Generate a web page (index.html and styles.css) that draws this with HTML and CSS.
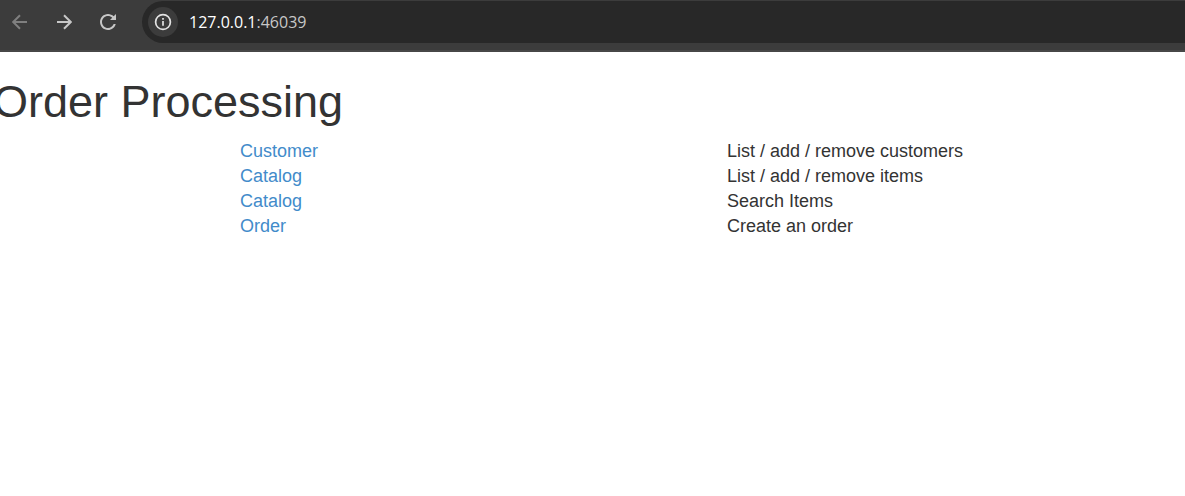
FILE: index.html
```html
<!DOCTYPE html>
<html lang="en">
<head>
<meta charset="utf-8">
<title>Order Processing</title>
<link rel="stylesheet" href="styles.css">
</head>
<body>
<header class="toolbar">
  <nav class="nav-buttons" aria-label="Browser navigation">
    <button class="nav-button" type="button" aria-label="Back" disabled>
      <svg viewBox="0 0 16 16"><path d="M15 8H1.5M8 1.2L1.2 8L8 14.8"/></svg>
    </button>
    <button class="nav-button" type="button" aria-label="Forward">
      <svg viewBox="0 0 16 16"><path d="M1 8H14.5M8 1.2L14.8 8L8 14.8"/></svg>
    </button>
    <button class="nav-button" type="button" aria-label="Reload">
      <svg class="solid" viewBox="4 4 16 16"><path d="M17.65 6.35C16.2 4.9 14.21 4 12 4c-4.42 0-7.99 3.58-7.99 8s3.57 8 7.99 8c3.73 0 6.84-2.55 7.73-6h-2.08c-.82 2.33-3.04 4-5.65 4-3.31 0-6-2.69-6-6s2.69-6 6-6c1.66 0 3.14.69 4.22 1.78L14 10h6V4l-2.35 2.35z"/></svg>
    </button>
  </nav>
  <div class="address-bar">
    <button class="site-info" type="button" aria-label="View site information">
      <svg viewBox="0 0 18 18"><circle cx="9" cy="9" r="7.4"/><path d="M9 8V12.8M9 5V6.8"/></svg>
    </button>
    <div class="address">127.0.0.1<span class="port">:46039</span></div>
  </div>
</header>
<main class="page">
  <h1 class="title">Order Processing</h1>
  <div class="menu">
    <div class="menu-row"><div><a class="menu-link" href="#customer">Customer</a></div><div>List / add / remove customers</div></div>
    <div class="menu-row"><div><a class="menu-link" href="#catalog">Catalog</a></div><div>List / add / remove items</div></div>
    <div class="menu-row"><div><a class="menu-link" href="#search">Catalog</a></div><div>Search Items</div></div>
    <div class="menu-row"><div><a class="menu-link" href="#order">Order</a></div><div>Create an order</div></div>
  </div>
</main>
</body>
</html>
```

FILE: styles.css
```css
* {
  box-sizing: border-box;
}

body {
  margin: 0;
  background: #fff;
  color: #333;
  font-family: "Liberation Sans", Arial, sans-serif;
  font-size: 18px;
  line-height: 25px;
  overflow-x: hidden;
}

.toolbar {
  display: flex;
  align-items: center;
  gap: 19px;
  padding: 1px 0 7px 5px;
  background: #3c3c3c;
  border-bottom: 2px solid #474747;
}

.nav-buttons {
  display: flex;
  gap: 14px;
}

.nav-button {
  display: flex;
  align-items: center;
  justify-content: center;
  width: 30px;
  height: 30px;
  padding: 0;
  border: 0;
  background: none;
  color: #c7c7c7;
}

.nav-button:disabled {
  color: #7f7f7f;
}

.nav-button svg {
  width: 16px;
  height: 16px;
  fill: none;
  stroke: currentColor;
  stroke-width: 2;
}

.nav-button .solid {
  fill: currentColor;
  stroke: none;
}

.address-bar {
  flex: 1;
  display: flex;
  align-items: center;
  gap: 11px;
  height: 42px;
  padding-left: 6px;
  border-radius: 21px 0 0 21px;
  background: #282828;
}

.site-info {
  display: flex;
  align-items: center;
  justify-content: center;
  width: 30px;
  height: 30px;
  padding: 0;
  border: 0;
  border-radius: 50%;
  background: #3c3c3c;
  color: #e3e3e3;
}

.site-info svg {
  width: 18px;
  height: 18px;
  fill: none;
  stroke: currentColor;
  stroke-width: 1.7;
}

.address {
  color: #fff;
  font-family: "Open Sans", "Noto Sans", sans-serif;
  font-size: 16px;
}

.port {
  color: #c7c7c7;
}

.title {
  margin: 25px 0 12px -7px;
  font-size: 45px;
  font-weight: 400;
  line-height: 50px;
}

.menu-row {
  display: grid;
  grid-template-columns: 487fr 458fr;
  padding-left: 240px;
}

.menu-link {
  color: #428bca;
  text-decoration: none;
}
```
